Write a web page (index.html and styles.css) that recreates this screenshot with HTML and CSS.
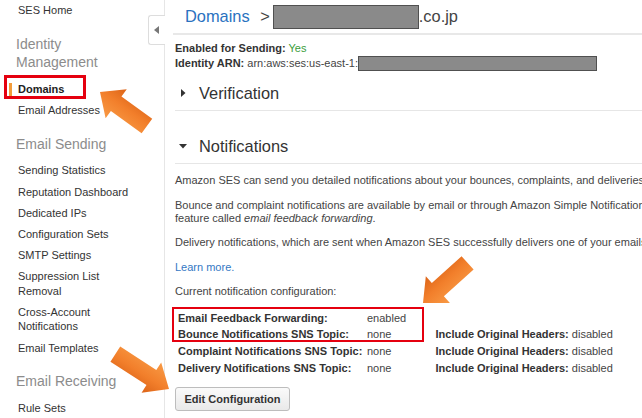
FILE: index.html
```html
<!DOCTYPE html>
<html lang="en">
<head>
<meta charset="utf-8">
<title>SES Domains</title>
<link rel="stylesheet" href="styles.css">
</head>
<body>
<div class="page">
  <nav class="sidebar">
    <a class="nav-item">SES Home</a>
    <div class="nav-group">Identity<br>Management</div>
    <a class="nav-item active">Domains<span class="hl-box nav-box"></span></a>
    <a class="nav-item">Email Addresses</a>
    <div class="nav-group">Email Sending</div>
    <a class="nav-item">Sending Statistics</a>
    <a class="nav-item">Reputation Dashboard</a>
    <a class="nav-item">Dedicated IPs</a>
    <a class="nav-item">Configuration Sets</a>
    <a class="nav-item">SMTP Settings</a>
    <a class="nav-item">Suppression List<br>Removal</a>
    <a class="nav-item">Cross-Account<br>Notifications</a>
    <a class="nav-item">Email Templates</a>
    <div class="nav-group">Email Receiving</div>
    <a class="nav-item">Rule Sets</a>
    <div class="collapse-tab"><svg width="5" height="8" viewBox="0 0 5 8"><path d="M5 0L0 4L5 8Z" fill="#777"/></svg></div>
  </nav>
  <main class="main">
    <div class="title-bar">
      <a class="crumb">Domains</a><span class="sep">&gt;</span><span class="redact redact-title"></span><span class="tld">.co.jp</span>
    </div>
    <div class="info">
      <div><b>Enabled for Sending:</b> <span class="yes">Yes</span></div>
      <div><b>Identity ARN:</b> arn:aws:ses:us-east-1:<span class="redact redact-arn"></span></div>
    </div>
    <div class="section-head verification">
      <span class="caret"><svg width="5" height="8" viewBox="0 0 5 8"><path d="M0 0L4.5 4L0 8Z" fill="#333"/></svg></span>Verification
    </div>
    <div class="section-head notifications">
      <span class="caret"><svg width="8" height="5" viewBox="0 0 8 5"><path d="M0 0L8 0L4 4.5Z" fill="#333"/></svg></span>Notifications
    </div>
    <div class="section-body">
      <p>Amazon SES can send you detailed notifications about your bounces, complaints, and deliveries either by email or through Amazon SNS.</p>
      <p>Bounce and complaint notifications are available by email or through Amazon Simple Notification Service (Amazon SNS). Email notifications use a<br>feature called <em>email feedback forwarding</em>.</p>
      <p>Delivery notifications, which are sent when Amazon SES successfully delivers one of your emails to a recipient's mail server, are available only through Amazon SNS.</p>
      <p><a class="link">Learn more.</a></p>
      <p>Current notification configuration:</p>
      <div class="config">
        <b>Email Feedback Forwarding:</b><span>enabled</span><span></span>
        <b>Bounce Notifications SNS Topic:</b><span>none</span><span><b>Include Original Headers:</b> disabled</span>
        <b>Complaint Notifications SNS Topic:</b><span>none</span><span><b>Include Original Headers:</b> disabled</span>
        <b>Delivery Notifications SNS Topic:</b><span>none</span><span><b>Include Original Headers:</b> disabled</span>
        <span class="hl-box table-box"></span>
      </div>
      <button class="btn">Edit Configuration</button>
    </div>
  </main>
  <svg class="arrows" width="642" height="418" viewBox="0 0 642 418">
    <defs>
      <linearGradient id="og" x1="0" y1="0" x2="0" y2="1">
        <stop offset="0" stop-color="#f89a45"/>
        <stop offset="0.55" stop-color="#f27f2b"/>
        <stop offset="1" stop-color="#dc6418"/>
      </linearGradient>
    </defs>
    <polygon transform="translate(100 92) rotate(216)" points="0,0 -20,-18 -20,-9 -58,-9 -58,9 -20,9 -20,18" fill="url(#og)"/>
    <polygon transform="translate(423 303) rotate(138)" points="0,0 -20,-18 -20,-9 -60,-9 -60,9 -20,9 -20,18" fill="url(#og)"/>
    <polygon transform="translate(169 389) rotate(33)" points="0,0 -21,-18 -21,-9 -64,-9 -64,9 -21,9 -21,18" fill="url(#og)"/>
  </svg>
</div>
</body>
</html>
```
FILE: styles.css
```css
* { box-sizing: border-box; margin: 0; padding: 0; }
html, body { width: 642px; height: 418px; overflow: hidden; background: #fff; }
body { font-family: "Liberation Sans", Arial, sans-serif; font-size: 11px; color: #444; }

.page { position: relative; display: flex; width: 642px; height: 418px; overflow: hidden; }

/* Sidebar */
.sidebar { position: relative; flex: 0 0 164px; }
.nav-item { position: relative; display: block; padding: 3.4px 0 3.4px 18px; line-height: 14.4px; font-size: 11px; color: #333; text-decoration: none; }
.nav-item.active { font-weight: bold; color: #222; }
.nav-item.active::before { content: ""; position: absolute; left: 9px; top: 4.7px; width: 3px; height: 14px; background: #f39c3a; }
.nav-group { margin: 15px 0 6.7px 16px; font-size: 14px; line-height: 17.7px; color: #8c8c8c; }

.hl-box { position: absolute; border: 2px solid #e5000f; pointer-events: none; }
.nav-box { left: 4px; top: -3.3px; width: 82px; height: 24px; border-width: 3px; }

.collapse-tab { position: absolute; left: 148px; top: 15px; width: 17px; height: 30px; background: #fff; border: 1px solid #ddd; border-right: none; border-radius: 3px 0 0 3px; display: flex; align-items: center; justify-content: center; padding-right: 2px; z-index: 2; }

/* Main */
.main { flex: 0 0 900px; border-left: 1px solid #e6e6e6; padding-left: 10px; }
.title-bar { display: flex; align-items: center; height: 35px; margin-left: -2px; padding-left: 12px; border-bottom: 2px solid #e8e8e8; font-size: 16.4px; color: #444; }
.crumb { color: #2a72bf; margin-right: 10.5px; }
.sep { margin-right: 3px; }
.redact { display: inline-block; background: #8a8a8a; border: 1px solid #505050; }
.redact-title { width: 146px; height: 24px; }
.tld { margin-left: 0; }

.info { margin-top: 6px; line-height: 15px; color: #444; }
.info b { color: #333; }
.yes { color: #3a9d3a; }
.redact-arn { width: 239px; height: 15px; vertical-align: top; }

.section-head { display: flex; align-items: center; height: 35px; border-bottom: 1px solid #e6e6e6; font-size: 16.4px; color: #333; }
.section-head.verification { margin-top: 5px; }
.section-head.notifications { margin-top: 18px; }
.caret { display: flex; align-items: center; justify-content: center; width: 16px; margin-right: 8px; }

.section-body { padding-top: 10px; }
.section-body p { line-height: 13px; margin-bottom: 11.5px; white-space: nowrap; }
.link { color: #3478c4; }

.config { position: relative; display: grid; grid-template-columns: 189px 68.5px auto; line-height: 16.7px; margin-left: 3px; width: 460px; color: #444; }
.config b { color: #333; }
.table-box { left: -6px; top: -2.3px; width: 252px; height: 35px; }

.btn { display: block; margin-top: 11px; height: 24px; padding: 0 8.5px; font-family: "Liberation Sans", Arial, sans-serif; font-size: 11px; font-weight: bold; color: #333; background: linear-gradient(#fafafa, #e9e9e9); border: 1px solid #bdbdbd; border-radius: 3px; }

.arrows { position: absolute; left: 0; top: 0; pointer-events: none; z-index: 3; }
```
